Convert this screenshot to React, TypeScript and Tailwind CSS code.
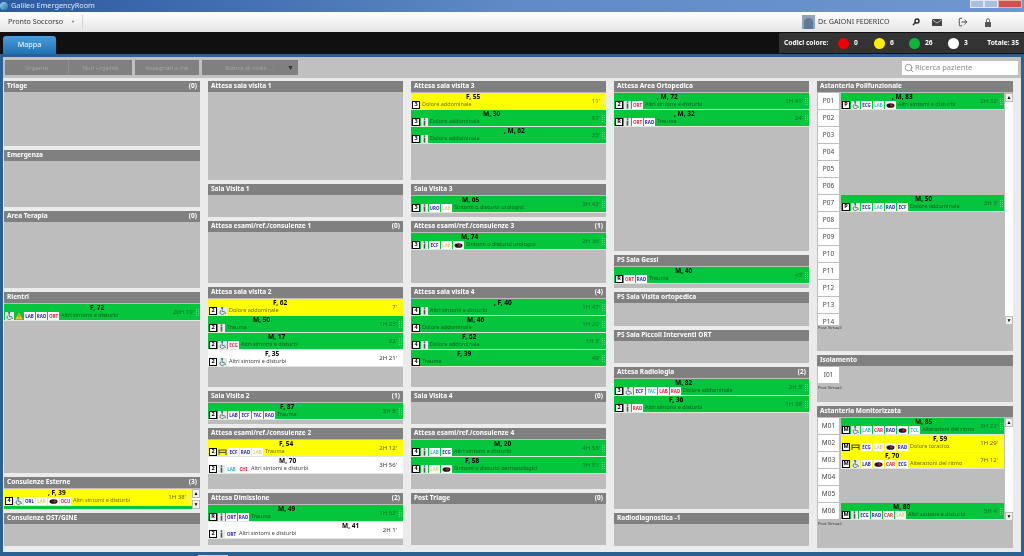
import { LogOut, Search } from "lucide-react";
import type { ReactNode } from "react";

type Tone = "b" | "c" | "r" | "y";
type Tag = string; // "LAB:b", or "car" for the drawn icon
type Fig = "s" | "w" | "b" | "";

type RowData = {
  bg: "g" | "y" | "w";
  name: string;
  x: string; // padding class for the name
  badge?: string;
  fig?: Fig;
  warn?: boolean;
  tags?: Tag[];
  text: string;
  time: string;
};

const toneClass: Record<Tone, string> = {
  b: "text-[#2424b4]",
  c: "text-[#2db7d2]",
  r: "text-[#e2203c]",
  y: "text-[#e6c878]",
};

const bgClass = { g: "bg-[#04c53c]", y: "bg-[#ffff00]", w: "bg-white" };
const textClass = { g: "text-[#06601f]", y: "text-[#6f6a00]", w: "text-[#444444]" };
const timeClass = { g: "text-[#05702a]", y: "text-[#5f5a00]", w: "text-[#333333]" };

function Standing() {
  return (
    <span className="w-[7px] h-[8px] bg-[#e4ece6] flex items-center justify-center shrink-0">
      <svg width="5" height="8" viewBox="0 0 5 8">
        <circle cx="2.5" cy="1.1" r="0.9" fill="#555" />
        <path d="M1.7 2.6h1.6v5H1.7z" fill="#555" />
      </svg>
    </span>
  );
}

function Wheel() {
  return (
    <span className="w-[9px] h-[8px] bg-[#e4ece6] flex items-center justify-center shrink-0">
      <svg width="8" height="8" viewBox="0 0 9 9" fill="none" stroke="#33506a" strokeWidth="0.8">
        <circle cx="3.6" cy="1" r="0.8" fill="#33506a" />
        <path d="M3.6 2.2v3h2.6l1.3 2.6" />
        <path d="M2.6 3.8a2.5 2.5 0 1 0 3.4 3.2" />
      </svg>
    </span>
  );
}

function Bed() {
  return (
    <span className="w-[9px] h-[8px] flex items-center justify-center shrink-0">
      <svg width="9" height="6" viewBox="0 0 9 6" fill="none" stroke="#333" strokeWidth="0.9">
        <path d="M0.5 1h8M1 1v5M8 1v5M1 3.4h7" />
      </svg>
    </span>
  );
}

function Warn() {
  return (
    <svg width="8" height="8" viewBox="0 0 9 9" className="shrink-0">
      <path d="M4.5 0.5 8.8 8.5H0.2z" fill="#f2c230" stroke="#b58a10" strokeWidth="0.4" />
      <path d="M4.2 3h0.6v3h-0.6z" fill="#333" />
    </svg>
  );
}

function CarIcon() {
  return (
    <span className="w-[11px] h-[8px] bg-white flex items-center justify-center shrink-0">
      <svg width="9" height="5" viewBox="0 0 10 6">
        <ellipse cx="5" cy="3" rx="4.8" ry="2.8" fill="#1a1a1a" />
        <circle cx="6.2" cy="2.8" r="1.5" fill="#c4182c" />
      </svg>
    </span>
  );
}

function Chip({ tag }: { tag: Tag }) {
  if (tag === "car") return <CarIcon />;
  const [label, tone] = tag.split(":");
  return (
    <span
      className={`h-[8px] w-[11px] bg-white flex items-center justify-center text-[4.5px] font-bold leading-none shrink-0 ${toneClass[tone as Tone]}`}
    >
      {label}
    </span>
  );
}

function Row({ r }: { r: RowData }) {
  return (
    <div className={`h-[17px] border-b border-[#dfe8df] flex overflow-hidden shrink-0 ${bgClass[r.bg]}`}>
      <div className="flex-1 min-w-0">
        <div className={`h-[7px] text-[6.5px] leading-[7px] font-bold text-black whitespace-nowrap ${r.x}`}>{r.name}</div>
        <div className="h-[8px] mt-[1px] pl-[1px] flex items-center gap-[1px]">
          {r.badge && (
            <span className="w-[8px] h-[8px] bg-white border border-black flex items-center justify-center text-[5.5px] font-bold leading-none text-black shrink-0">
              {r.badge}
            </span>
          )}
          {r.fig === "s" && <Standing />}
          {r.fig === "w" && <Wheel />}
          {r.fig === "b" && <Bed />}
          {r.warn && <Warn />}
          {r.tags?.map((t, i) => <Chip key={i} tag={t} />)}
          <span className={`ml-[1px] text-[5.5px] leading-none whitespace-nowrap ${textClass[r.bg]}`}>{r.text}</span>
        </div>
      </div>
      <div className={`flex items-center gap-[1px] pr-[1px] text-[6px] whitespace-nowrap ${timeClass[r.bg]}`}>
        {r.time}
        <span className="ml-[1px] w-[3px] h-[7px] border-x border-dotted border-[#ffffff55]" />
      </div>
    </div>
  );
}

function Panel({ title, count, className, children }: { title: string; count?: string; className: string; children?: ReactNode }) {
  return (
    <section className={`bg-[#bdbdbd] overflow-hidden shrink-0 ${className}`}>
      <header className="h-[11px] mb-[1px] bg-[#808080] px-[3px] pb-[1px] flex items-center justify-between text-[6.5px] font-bold leading-none text-white">
        <span>{title}</span>
        {count && <span>{count}</span>}
      </header>
      {children}
    </section>
  );
}

function ScrollBar({ className }: { className: string }) {
  return (
    <div className={`w-[8px] bg-white flex flex-col justify-between items-center shrink-0 ${className}`}>
      <span className="w-[8px] h-[9px] bg-[#f0f0f0] border border-[#bbbbbb] text-[5px] leading-[7px] text-center text-black">▲</span>
      <span className="w-[8px] h-[9px] bg-[#f0f0f0] border border-[#bbbbbb] text-[5px] leading-[7px] text-center text-black">▼</span>
    </div>
  );
}

function Bay({ cells, rows, height, scroll }: { cells: string[]; rows: Record<number, RowData>; height: string; scroll?: boolean }) {
  return (
    <div className={`flex overflow-hidden ${height}`}>
      <div className="w-[23px] ml-[1px] shrink-0">
        {cells.map((c) => (
          <div key={c} className="h-[16px] w-[21px] mb-[1px] bg-white flex items-center justify-center text-[6.5px] text-[#444444]">
            {c}
          </div>
        ))}
      </div>
      <div className="flex-1 min-w-0">
        {cells.map((c, i) =>
          rows[i] ? <Row key={c} r={rows[i]} /> : <div key={c} className="h-[17px]" />
        )}
      </div>
      {scroll && <ScrollBar className="ml-[1px]" />}
    </div>
  );
}

function PostVirtuali() {
  return <div className="ml-[1px] text-[4.2px] leading-[6px] text-[#333333]">Post Virtuali</div>;
}

export default function App() {
  const pCells = ["P01", "P02", "P03", "P04", "P05", "P06", "P07", "P08", "P09", "P10", "P11", "P12", "P13", "P14"];
  const mCells = ["M01", "M02", "M03", "M04", "M05", "M06"];

  return (
    <div className="w-[1024px] h-[556px] overflow-hidden flex flex-col bg-[#2a6192] blur-[0.45px] font-['Noto_Sans',sans-serif]">
      {/* window title */}
      <div className="h-[12px] shrink-0 flex items-center justify-between bg-gradient-to-r from-[#2c5aa0] via-[#5f8ac6] to-[#6f97cf]">
        <div className="flex items-center gap-[3px]">
          <span className="w-[8px] h-[8px] rounded-full bg-gradient-to-br from-[#9adcf0] to-[#1f6f9f]" />
          <span className="text-[7.3px] leading-none text-[#dfe8f2]">Galileo EmergencyRoom</span>
        </div>
        <div className="self-start h-[8px] flex mr-[2px]">
          <span className="w-[14px] bg-[#a9c0dc] border border-[#dfe8f2]" />
          <span className="w-[14px] bg-[#a9c0dc] border border-[#dfe8f2]" />
          <span className="w-[24px] bg-[#d2504a] border border-[#e8b0a8]" />
        </div>
      </div>

      {/* menu */}
      <div className="h-[20px] shrink-0 flex items-center bg-gradient-to-b from-white to-[#e4e4e4] text-[#333333]">
        <span className="ml-[8px] w-[58px] text-[7.2px] leading-none whitespace-nowrap">Pronto Soccorso</span>
        <span className="ml-[5px] text-[4px] text-[#777777]">▼</span>
        <span className="ml-[7px] w-[1px] h-[14px] bg-[#d4d4d4]" />
        <span className="ml-auto w-[13px] h-[14px] bg-[#8ea4ba] flex items-end justify-center overflow-hidden">
          <span className="w-[9px] h-[11px] rounded-t-full bg-[#5d7a99]" />
        </span>
        <span className="ml-[3px] w-[73px] text-[7.1px] leading-none whitespace-nowrap text-[#333333]">Dr. GAIONI FEDERICO</span>
        <svg className="ml-[21px]" width="8" height="8" viewBox="0 0 8 8" fill="none" stroke="#222" strokeWidth="1.4">
          <circle cx="5" cy="3" r="2" />
          <path d="M3.5 4.5 1 7" />
        </svg>
        <svg className="ml-[12px]" width="10" height="7" viewBox="0 0 10 7">
          <rect width="10" height="7" rx="0.5" fill="#444" />
          <path d="M0.5 0.8 5 4l4.5-3.2" fill="none" stroke="#eee" strokeWidth="0.7" />
        </svg>
        <LogOut className="ml-[16px] text-[#333333]" size={10} strokeWidth={2} />
        <svg className="ml-[17px] mr-[33px]" width="6" height="9" viewBox="0 0 6 9">
          <path d="M1.5 4V2.2a1.5 1.5 0 0 1 3 0V4" fill="none" stroke="#555" strokeWidth="0.9" />
          <rect y="4" width="6" height="5" rx="0.5" fill="#555" />
        </svg>
      </div>

      {/* tab strip */}
      <div className="h-[22px] shrink-0 flex items-end justify-between bg-[#101010]">
        <div className="ml-[3px] w-[53px] h-[18px] rounded-t-[3px] bg-gradient-to-b from-[#4a9edb] to-[#1f72b4] flex items-center justify-center text-[7.2px] leading-none text-white">
          Mappa
        </div>
        <div className="self-center w-[245px] h-[20px] bg-[#333333] flex items-center text-[6.7px] font-bold leading-none text-white">
          <span className="ml-[5px] w-[54px]">Codici colore:</span>
          <span className="w-[11px] h-[11px] rounded-full bg-[#f00000]" />
          <span className="ml-[5px] w-[20px]">0</span>
          <span className="w-[11px] h-[11px] rounded-full bg-[#ffee00]" />
          <span className="ml-[5px] w-[19px]">6</span>
          <span className="w-[11px] h-[11px] rounded-full bg-[#0cb53c]" />
          <span className="ml-[5px] w-[23px]">26</span>
          <span className="w-[11px] h-[11px] rounded-full bg-white" />
          <span className="ml-[5px]">3</span>
          <span className="ml-auto mr-[5px]">Totale: 35</span>
        </div>
      </div>

      {/* main */}
      <div className="mt-[3px] mx-[3px] h-[495px] shrink-0 bg-[#ebebeb] flex flex-col">
        <div className="h-[21px] shrink-0 bg-[#c0c0c0] flex items-center pl-[2px] pr-[3px] text-[6px] leading-none text-[#a2a2a2] whitespace-nowrap">
          <div className="w-[127px] h-[15px] bg-[#808080] flex">
            <span className="w-[64px] flex items-center justify-center border-r border-[#8e8e8e]">Urgente</span>
            <span className="flex-1 flex items-center justify-center">Non urgente</span>
          </div>
          <span className="ml-[3px] w-[64px] h-[15px] bg-[#808080] flex items-center justify-center">Assegnati a me</span>
          <span className="ml-[3px] w-[96px] h-[15px] bg-[#808080] flex items-center justify-between pl-[23px] pr-[4px]">
            <span>Stanza di visita ...</span>
            <span className="text-[7px] text-[#333333]">▼</span>
          </span>
          <div className="ml-auto w-[116px] h-[14px] bg-white flex items-center pl-[2px] gap-[1px] text-[7.5px] text-[#888888]">
            <Search size={10} className="text-[#888888]" />
            Ricerca paziente
          </div>
        </div>

        <div className="mt-[3px] pl-[1px] flex gap-[8px]">
          {/* column 1 */}
          <div className="w-[196px] flex flex-col gap-[4px]">
            <Panel title="Triage" count="(0)" className="h-[65px]" />
            <Panel title="Emergenza" className="h-[57px]" />
            <Panel title="Area Terapia" count="(0)" className="h-[77px]" />
            <Panel title="Rientri" className="h-[181px]">
              <Row r={{ bg: "g", name: "F, 72", x: "pl-[86px]", fig: "w", warn: true, tags: ["LAB:b", "RAD:b", "ORT:r"], text: "Altri sintomi e disturbi", time: "20H 19'" }} />
            </Panel>
            <Panel title="Consulenze Esterne" count="(3)" className="h-[32px]">
              <div className="flex h-[20px]">
                <div className="flex-1 min-w-0 overflow-hidden">
                  <Row r={{ bg: "y", name: ", F, 39", x: "pl-[44px]", badge: "4", fig: "w", tags: ["ORL:b", "LAB:y", "car", "OCU:r"], text: "Altri sintomi e disturbi", time: "1H 38'" }} />
                  <div className="h-[3px] bg-[#04c53c]" />
                </div>
                <ScrollBar className="h-[20px]" />
              </div>
            </Panel>
            <Panel title="Consulenze OST/GINE" className="h-[33px]" />
          </div>

          {/* column 2 */}
          <div className="w-[195px] flex flex-col gap-[4px]">
            <Panel title="Attesa sala visita 1" className="h-[99px]" />
            <Panel title="Sala Visita 1" className="h-[33px]" />
            <Panel title="Attesa esami/ref./consulenze 1" count="(0)" className="h-[62px]" />
            <Panel title="Attesa sala visita 2" className="h-[100px]">
              <Row r={{ bg: "y", name: "F, 62", x: "pl-[65px]", badge: "2", fig: "w", text: "Dolore addominale", time: "7'" }} />
              <Row r={{ bg: "g", name: "M, 50", x: "pl-[45px]", badge: "2", fig: "s", text: "Trauma", time: "1H 23'" }} />
              <Row r={{ bg: "g", name: "M, 17", x: "pl-[60px]", badge: "2", fig: "w", tags: ["ECG:r"], text: "Altri sintomi e disturbi", time: "22'" }} />
              <Row r={{ bg: "w", name: "F, 35", x: "pl-[57px]", badge: "2", fig: "w", text: "Altri sintomi e disturbi", time: "2H 21'" }} />
            </Panel>
            <Panel title="Sala Visita 2" count="(1)" className="h-[33px]">
              <Row r={{ bg: "g", name: "F, 87", x: "pl-[72px]", badge: "2", fig: "w", tags: ["LAB:b", "ECF:b", "TAC:b", "RAD:b"], text: "Trauma", time: "5H 8'" }} />
            </Panel>
            <Panel title="Attesa esami/ref./consulenze 2" className="h-[61px]">
              <Row r={{ bg: "y", name: "F, 54", x: "pl-[71px]", badge: "2", fig: "b", tags: ["ECF:b", "RAD:b", "LAB:y"], text: "Trauma", time: "2H 12'" }} />
              <Row r={{ bg: "w", name: "M, 70", x: "pl-[71px]", badge: "2", fig: "s", tags: ["LAB:c", "CHI:r"], text: "Altri sintomi e disturbi", time: "3H 56'" }} />
            </Panel>
            <Panel title="Attesa Dimissione" count="(2)" className="h-[52px]">
              <Row r={{ bg: "g", name: "M, 49", x: "pl-[70px]", badge: "R", fig: "s", tags: ["ORT:b", "RAD:b"], text: "Trauma", time: "1H 52'" }} />
              <Row r={{ bg: "w", name: "M, 41", x: "pl-[134px]", badge: "2", fig: "s", tags: ["ORT:b"], text: "Altri sintomi e disturbi", time: "2H 1'" }} />
            </Panel>
          </div>

          {/* column 3 */}
          <div className="w-[195px] flex flex-col gap-[4px]">
            <Panel title="Attesa sala visita 3" className="h-[99px]">
              <Row r={{ bg: "y", name: "F, 55", x: "pl-[55px]", badge: "3", text: "Dolore addominale", time: "11'" }} />
              <Row r={{ bg: "g", name: "M, 30", x: "pl-[72px]", badge: "3", fig: "s", text: "Dolore addominale", time: "57'" }} />
              <Row r={{ bg: "g", name: ", M, 62", x: "pl-[93px]", badge: "3", fig: "s", text: "Dolore addominale", time: "33'" }} />
            </Panel>
            <Panel title="Sala Visita 3" className="h-[33px]">
              <Row r={{ bg: "g", name: "M, 65", x: "pl-[51px]", badge: "3", fig: "s", tags: ["URO:b", "LAB:y"], text: "Sintomi o disturbi urologici", time: "3H 43'" }} />
            </Panel>
            <Panel title="Attesa esami/ref./consulenze 3" count="(1)" className="h-[62px]">
              <Row r={{ bg: "g", name: "M, 74", x: "pl-[50px]", badge: "3", fig: "s", tags: ["ECF:b", "LAB:y", "car"], text: "Sintomi o disturbi urologici", time: "2H 36'" }} />
            </Panel>
            <Panel title="Attesa sala visita 4" count="(4)" className="h-[100px]">
              <Row r={{ bg: "g", name: ", F, 40", x: "pl-[83px]", badge: "4", fig: "s", text: "Altri sintomi e disturbi", time: "1H 47'" }} />
              <Row r={{ bg: "g", name: "M, 46", x: "pl-[56px]", badge: "4", text: "Dolore addominale", time: "1H 20'" }} />
              <Row r={{ bg: "g", name: "F, 62", x: "pl-[51px]", badge: "4", fig: "s", text: "Dolore addominale", time: "1H 3'" }} />
              <Row r={{ bg: "g", name: "F, 39", x: "pl-[46px]", badge: "4", text: "Trauma", time: "49'" }} />
            </Panel>
            <Panel title="Sala Visita 4" count="(0)" className="h-[33px]" />
            <Panel title="Attesa esami/ref./consulenze 4" className="h-[61px]">
              <Row r={{ bg: "g", name: "M, 20", x: "pl-[83px]", badge: "4", fig: "s", tags: ["LAB:c", "ECG:b"], text: "Altri sintomi e disturbi", time: "4H 53'" }} />
              <Row r={{ bg: "g", name: "F, 58", x: "pl-[54px]", badge: "4", fig: "s", tags: ["LAB:y", "car"], text: "Sintomi o disturbi dermatologici", time: "1H 51'" }} />
            </Panel>
            <Panel title="Post Triage" count="(0)" className="h-[52px]" />
          </div>

          {/* column 4 */}
          <div className="w-[195px] flex flex-col gap-[4px]">
            <Panel title="Attesa Area Ortopedica" className="h-[170px]">
              <Row r={{ bg: "g", name: ", M, 72", x: "pl-[43px]", badge: "2", fig: "s", tags: ["ORT:r"], text: "Altri sintomi e disturbi", time: "1H 41'" }} />
              <Row r={{ bg: "g", name: ", M, 32", x: "pl-[60px]", badge: "R", fig: "s", tags: ["ORT:r", "RAD:b"], text: "Trauma", time: "24'" }} />
            </Panel>
            <Panel title="PS Sala Gessi" className="h-[33px]">
              <Row r={{ bg: "g", name: "M, 40", x: "pl-[61px]", badge: "R", tags: ["ORT:r", "RAD:b"], text: "Trauma", time: "43'" }} />
            </Panel>
            <Panel title="PS Sala Visita ortopedica" className="h-[34px]" />
            <Panel title="PS Sala Piccoli Interventi ORT" className="h-[33px]" />
            <Panel title="Attesa Radiologia" count="(2)" className="h-[142px]">
              <Row r={{ bg: "g", name: "M, 82", x: "pl-[61px]", badge: "3", fig: "w", tags: ["ECF:b", "TAC:c", "LAB:r", "RAD:r"], text: "Dolore addominale", time: "2H 5'" }} />
              <Row r={{ bg: "g", name: "F, 36", x: "pl-[55px]", badge: "2", fig: "s", tags: ["RAD:r"], text: "Altri sintomi e disturbi", time: "1H 38'" }} />
            </Panel>
            <Panel title="Radiodiagnostica -1" className="h-[33px]" />
          </div>

          {/* column 5 */}
          <div className="w-[196px] flex flex-col gap-[4px]">
            <Panel title="Astanteria Polifunzionale" className="h-[270px]">
              <Bay
                cells={pCells}
                height="h-[232px]"
                scroll
                rows={{
                  0: { bg: "g", name: ", M, 83", x: "pl-[51px]", badge: "P", fig: "w", tags: ["ECG:b", "LAB:c", "car"], text: "Altri sintomi e disturbi", time: "2H 32'" },
                  6: { bg: "g", name: "M, 50", x: "pl-[74px]", badge: "P", fig: "w", tags: ["ECG:b", "LAB:c", "RAD:b", "ECF:b"], text: "Dolore addominale", time: "3H 3'" },
                }}
              />
              <PostVirtuali />
            </Panel>
            <Panel title="Isolamento" className="h-[47px]">
              <Bay cells={["I01"]} rows={{}} height="h-[18px]" />
              <PostVirtuali />
            </Panel>
            <Panel title="Astanteria Monitorizzata" className="h-[142px]">
              <Bay
                cells={mCells}
                height="h-[103px]"
                scroll
                rows={{
                  0: { bg: "g", name: "M, 85", x: "pl-[74px]", badge: "M", fig: "w", tags: ["LAB:c", "CAR:r", "RAD:b", "car", "TCL:c"], text: "Alterazioni del ritmo", time: "3H 22'" },
                  1: { bg: "y", name: "F, 59", x: "pl-[92px]", badge: "M", fig: "b", tags: ["ECG:b", "LAB:y", "car", "RAD:b"], text: "Dolore toracico", time: "1H 29'" },
                  2: { bg: "y", name: "F, 70", x: "pl-[44px]", badge: "M", fig: "w", tags: ["LAB:b", "car", "CAR:r", "ECG:b"], text: "Alterazioni del ritmo", time: "7H 12'" },
                  5: { bg: "g", name: "M, 80", x: "pl-[52px]", badge: "M", fig: "s", tags: ["ECG:b", "RAD:b", "CAR:r", "LAB:y"], text: "Altri sintomi e disturbi", time: "5H 4'" },
                }}
              />
              <PostVirtuali />
            </Panel>
          </div>
        </div>
      </div>

      {/* bottom edge */}
      <div className="mt-auto ml-[198px] w-[30px] h-[1px] bg-[#cfd8e0]" />
    </div>
  );
}
